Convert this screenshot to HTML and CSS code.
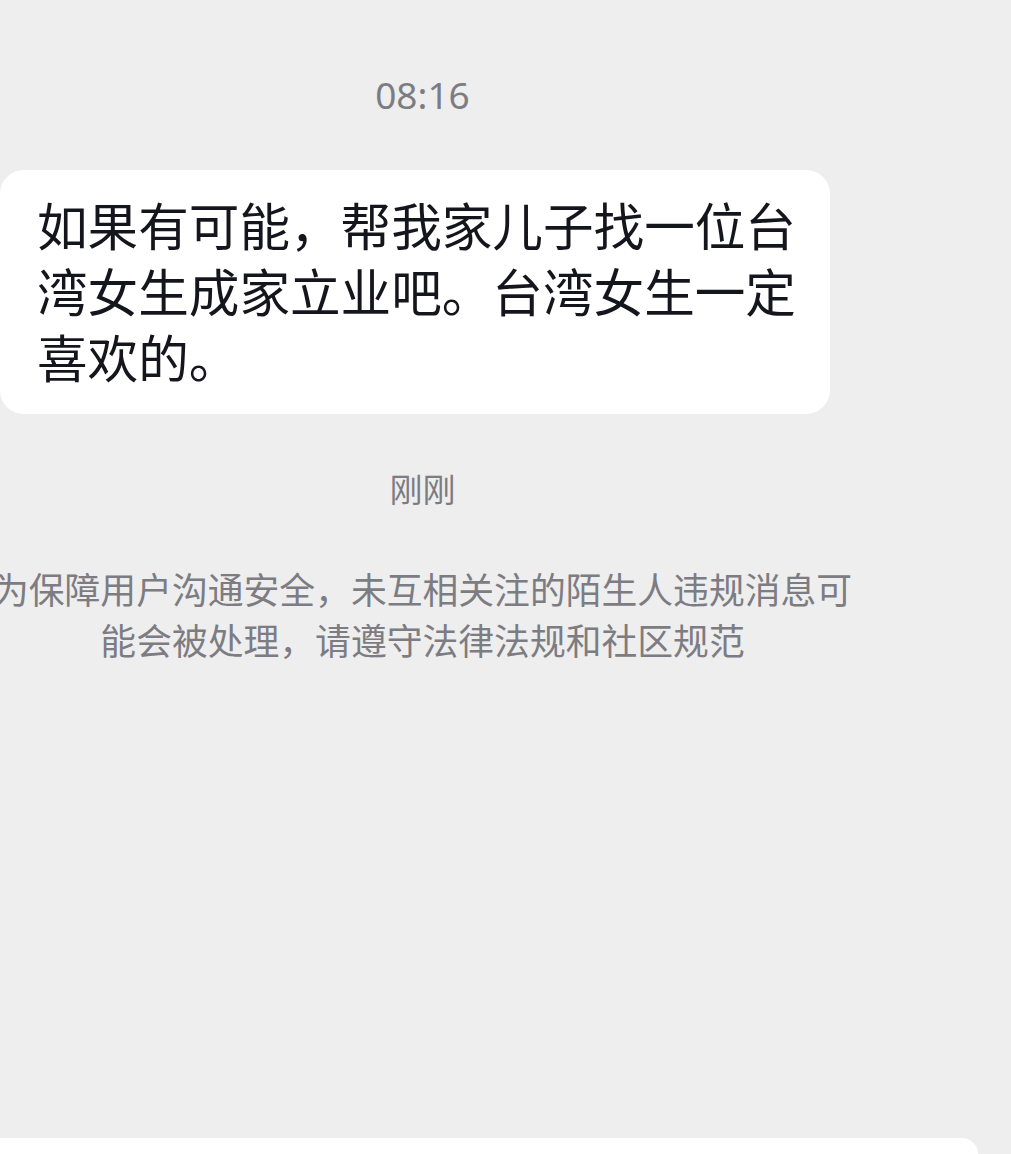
FILE: index.html
```html
<!DOCTYPE html>
<html lang="zh-CN">
<head>
    <meta charset="UTF-8">
    <meta name="viewport" content="width=device-width, initial-scale=1.0">
    <title>聊天</title>
    <link rel="stylesheet" href="styles.css">
</head>
<body>
    <div class="page">
        <div class="chat">
            <div class="time">08:16</div>

            <div class="bubble">如果有可能，帮我家儿子找一位台湾女生成家立业吧。台湾女生一定喜欢的。</div>

            <div class="time time-recent">刚刚</div>

            <div class="notice">
                <div>为保障用户沟通安全，未互相关注的陌生人违规消息可</div>
                <div>能会被处理，请遵守法律法规和社区规范</div>
            </div>
        </div>

        <div class="spacer"></div>

        <!-- 输入框 -->
        <div class="input-bar"></div>
    </div>
</body>
</html>
```

FILE: styles.css
```css
* {
    margin: 0;
    padding: 0;
    box-sizing: border-box;
}

body {
    background-color: #eeeeee;
    font-family: 'Noto Sans CJK SC', 'Noto Sans', sans-serif;
    overflow: hidden;
}

.page {
    height: 1154px;
    display: flex;
    flex-direction: column;
}

.chat {
    width: 845px;
    padding-top: 70px;
    display: flex;
    flex-direction: column;
    align-items: center;
}

.time {
    font-family: 'Noto Sans', 'Noto Sans CJK SC', sans-serif;
    font-size: 37px;
    line-height: 50px;
    color: #7c7c82;
}

.time-recent {
    font-family: 'Noto Sans CJK SC', sans-serif;
    font-size: 33px;
    margin-top: 49px;
}

.bubble {
    align-self: flex-start;
    width: 830px;
    margin-top: 50px;
    padding: 21px 30px 25px 37px;
    background-color: #ffffff;
    border-radius: 24px;
    font-size: 50.6px;
    line-height: 66px;
    color: #15151d;
}

.notice {
    margin-top: 50px;
    display: flex;
    flex-direction: column;
    align-items: center;
    font-size: 35.8px;
    line-height: 51px;
    color: #7c7c82;
    white-space: nowrap;
}

.spacer {
    flex: 1;
}

.input-bar {
    width: 978px;
    height: 16px;
    background-color: #ffffff;
    border-top-right-radius: 22px;
}
```
